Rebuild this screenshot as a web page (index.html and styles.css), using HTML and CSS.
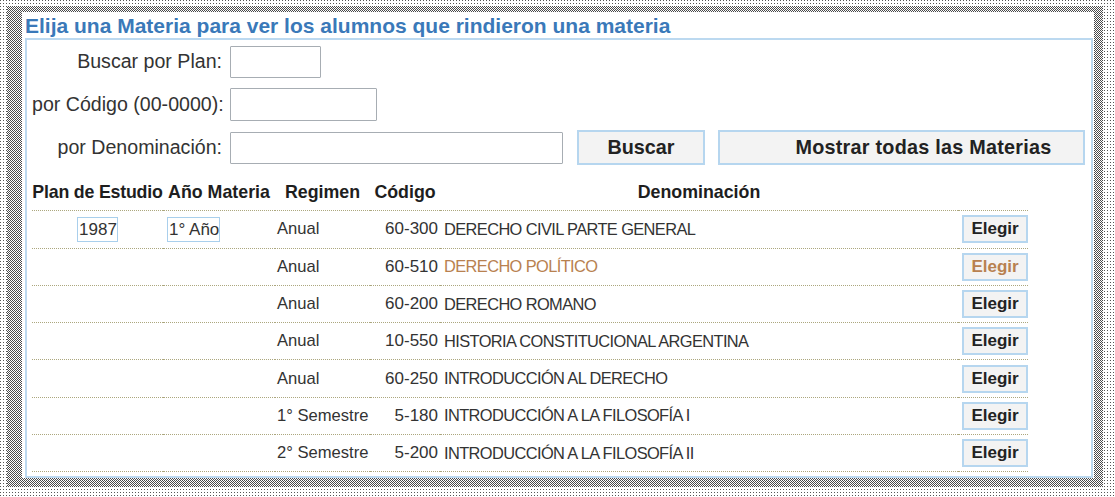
FILE: index.html
```html
<!DOCTYPE html>
<html lang="es">
<head>
    <meta charset="UTF-8">
    <title>Elegir Materia</title>
    <link rel="stylesheet" href="styles.css">
</head>
<body>
    <div class="marco">
        <div class="sombra">
            <div class="hoja">
                <h2 class="titulo">Elija una Materia para ver los alumnos que rindieron una materia</h2>

                <div class="caja">
                    <!-- Busqueda -->
                    <div class="busqueda">
                        <div class="fila">
                            <label class="etiqueta">Buscar por Plan:</label>
                            <input type="text" class="campo campo-plan">
                        </div>
                        <div class="fila">
                            <label class="etiqueta">por Código (00-0000):</label>
                            <input type="text" class="campo campo-codigo">
                        </div>
                        <div class="fila">
                            <label class="etiqueta">por Denominación:</label>
                            <input type="text" class="campo campo-denominacion">
                            <button class="boton boton-buscar">Buscar</button>
                            <button class="boton boton-todas">Mostrar todas las Materias</button>
                        </div>
                    </div>

                    <!-- Tabla de materias -->
                    <table class="materias">
                        <thead>
                            <tr>
                                <th class="col-plan">Plan de Estudio</th>
                                <th class="col-anio">Año Materia</th>
                                <th class="col-regimen">Regimen</th>
                                <th class="col-codigo">Código</th>
                                <th class="col-denominacion">Denominación</th>
                                <th class="col-elegir"></th>
                            </tr>
                        </thead>
                        <tbody>
                            <tr>
                                <td class="plan"><span class="recuadro">1987</span></td>
                                <td class="anio"><span class="recuadro">1° Año</span></td>
                                <td class="regimen">Anual</td>
                                <td class="codigo">60-300</td>
                                <td class="denominacion">DERECHO CIVIL PARTE GENERAL</td>
                                <td class="elegir"><button class="boton-elegir">Elegir</button></td>
                            </tr>
                            <tr class="activa">
                                <td></td>
                                <td></td>
                                <td class="regimen">Anual</td>
                                <td class="codigo">60-510</td>
                                <td class="denominacion">DERECHO POLÍTICO</td>
                                <td class="elegir"><button class="boton-elegir">Elegir</button></td>
                            </tr>
                            <tr>
                                <td></td>
                                <td></td>
                                <td class="regimen">Anual</td>
                                <td class="codigo">60-200</td>
                                <td class="denominacion">DERECHO ROMANO</td>
                                <td class="elegir"><button class="boton-elegir">Elegir</button></td>
                            </tr>
                            <tr>
                                <td></td>
                                <td></td>
                                <td class="regimen">Anual</td>
                                <td class="codigo">10-550</td>
                                <td class="denominacion">HISTORIA CONSTITUCIONAL ARGENTINA</td>
                                <td class="elegir"><button class="boton-elegir">Elegir</button></td>
                            </tr>
                            <tr>
                                <td></td>
                                <td></td>
                                <td class="regimen">Anual</td>
                                <td class="codigo">60-250</td>
                                <td class="denominacion">INTRODUCCIÓN AL DERECHO</td>
                                <td class="elegir"><button class="boton-elegir">Elegir</button></td>
                            </tr>
                            <tr>
                                <td></td>
                                <td></td>
                                <td class="regimen">1° Semestre</td>
                                <td class="codigo">5-180</td>
                                <td class="denominacion">INTRODUCCIÓN A LA FILOSOFÍA I</td>
                                <td class="elegir"><button class="boton-elegir">Elegir</button></td>
                            </tr>
                            <tr>
                                <td></td>
                                <td></td>
                                <td class="regimen">2° Semestre</td>
                                <td class="codigo">5-200</td>
                                <td class="denominacion">INTRODUCCIÓN A LA FILOSOFÍA II</td>
                                <td class="elegir"><button class="boton-elegir">Elegir</button></td>
                            </tr>
                        </tbody>
                    </table>
                </div>
            </div>
        </div>
    </div>
</body>
</html>
```

FILE: styles.css
```css
body { margin: 0; font-family: "Liberation Sans", Arial, sans-serif; color: #333; background: #fff; }

/* sombra punteada alrededor de la captura */
.marco {
    width: 1115px; height: 497px; box-sizing: border-box;
    padding: 6px 12px 10px 7px;
    background: #fff conic-gradient(at 1px 1px, transparent 75%, #555 0) 0 0 / 3px 3px;
}
.sombra {
    padding: 6px 9px 9px 15px;
    background: repeating-conic-gradient(#4a4a4a 0 25%, #fff 0 50%) 0 0 / 2px 2px;
}
.hoja { background: #fff; height: 466px; display: flex; flex-direction: column; }

.titulo {
    margin: 0; padding-left: 3px; height: 26px; line-height: 28px;
    font-size: 21px; font-weight: bold; color: #3a79b9; white-space: nowrap;
}

.caja {
    flex: 1; margin: 0 1px 0 3px;
    border: 2px solid #bcd9f0;
    padding: 5px 0 0 5px;
}

/* formulario de busqueda */
.busqueda { display: flex; flex-direction: column; gap: 10px; }
.fila { display: flex; align-items: center; height: 33px; }
.etiqueta { width: 190px; margin-right: 8px; text-align: right; font-size: 19.6px; color: #333; white-space: nowrap; }
.campo { box-sizing: border-box; height: 32px; border: 1px solid #a7adb3; border-radius: 1px; margin: 0; padding: 0 4px; background: #fff; }
.campo-plan { width: 91px; }
.campo-codigo { width: 147px; height: 33px; }
.campo-denominacion { width: 333px; }
.boton {
    box-sizing: border-box; height: 35px; margin: 0 0 0 13px;
    border: 2px solid #b6d6ef; background: #f3f3f3;
    font-family: inherit; font-size: 19.8px; font-weight: bold; color: #222; white-space: nowrap;
}
.boton-buscar { width: 128px; margin-left: 14px; }
.boton-todas { width: 367px; padding: 0 0 0 44px; letter-spacing: 0.25px; }

/* tabla */
.materias { width: 996px; border-collapse: collapse; margin-top: 10px; table-layout: fixed; }
.materias th, .materias td { padding: 0; height: 36.3px; border-bottom: 1px dotted #aca77e; }
.materias th { font-size: 17.8px; font-weight: bold; color: #1e1e1e; text-align: center; white-space: nowrap; }
.materias td { font-size: 17px; color: #333; white-space: nowrap; }
.col-plan { width: 131px; letter-spacing: -0.2px; }
.col-anio { width: 112px; }
.col-regimen { width: 95px; }
.col-codigo { width: 70px; }
.col-denominacion { width: 518px; }
.col-elegir { width: 70px; }

.plan { text-align: center; }
.anio { padding-left: 4px !important; }
.recuadro { display: inline-block; border: 1px solid #a9cfec; padding: 2px 0 2px 1px; line-height: 19px; }
.regimen { padding-left: 2px !important; font-size: 16.6px !important; }
.codigo { text-align: right; padding-right: 2px !important; }
.denominacion { padding-left: 4px !important; font-size: 16.4px !important; letter-spacing: -0.6px; }
.elegir { text-align: right; }
.boton-elegir {
    width: 66px; height: 28px; margin: 0; padding: 0; box-sizing: border-box;
    border: 2px solid #b6d6ef; background: #f3f3f3;
    font-family: inherit; font-size: 17px; font-weight: bold; color: #222;
}
.activa .denominacion, .activa .boton-elegir { color: #b88150; }
```
